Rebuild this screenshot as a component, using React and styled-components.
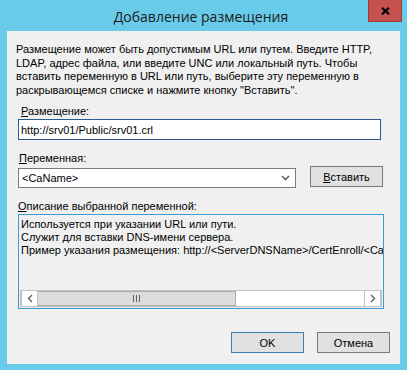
import React from "react";
import styled, { createGlobalStyle } from "styled-components";

const colors = {
  frame: "#69cbea",
  face: "#f0f0f0",
  text: "#000000",
  closeRed: "#c75050",
  closeBorder: "#9c3b36",
  focusBorder: "#2a5b8f",
  infoBorder: "#3c9ad6",
  okBorder: "#3c7fb1",
  grayBorder: "#7a7a7a",
  buttonBg: "#e1e1e1",
  scrollBorder: "#c2c2c2",
  thumb: "#dcdcdc",
  thumbBorder: "#acacac",
  arrow: "#606060",
};

const GlobalStyle = createGlobalStyle`
  html, body {
    margin: 0;
    padding: 0;
    background: ${colors.frame};
  }
  * {
    box-sizing: border-box;
  }
`;

const Accel = ({ children }) => <u>{children}</u>;

const App = () => {
  return (
    <Window>
      <GlobalStyle />
      <TitleBar>
        <span />
        <Title>Добавление размещения</Title>
        <CloseButton aria-label="Закрыть">
          <svg width="9" height="8" viewBox="0 0 9 8">
            <path d="M1 0.8 L8 7.2 M8 0.8 L1 7.2" stroke="#000" strokeWidth="2.2" />
          </svg>
        </CloseButton>
      </TitleBar>
      <Client>
        <Intro>
          Размещение может быть допустимым URL или путем. Введите HTTP,
          LDAP, адрес файла, или введите UNC или локальный путь. Чтобы
          вставить переменную в URL или путь, выберите эту переменную в
          раскрывающемся списке и нажмите кнопку "Вставить".
        </Intro>

        <FieldLabel indent={3}>
          <Accel>Р</Accel>азмещение:
        </FieldLabel>
        <TextInput defaultValue="http://srv01/Public/srv01.crl" />

        <FieldLabel indent={1} gap={11}>
          <Accel>П</Accel>еременная:
        </FieldLabel>
        <VariableRow>
          <Select>
            <span>&lt;CaName&gt;</span>
            <svg width="9" height="6" viewBox="0 0 9 6">
              <path d="M1 1 L4.5 4.5 L8 1" fill="none" stroke={colors.arrow} strokeWidth="1.6" />
            </svg>
          </Select>
          <DialogButton>
            <Accel>В</Accel>ставить
          </DialogButton>
        </VariableRow>

        <FieldLabel indent={0} gap={11}>
          <Accel>О</Accel>писание выбранной переменной:
        </FieldLabel>
        <InfoBox>
          <InfoText>
            <div>Используется при указании URL или пути.</div>
            <div>Служит для вставки DNS-имени сервера.</div>
            <div>
              Пример указания размещения: http://&lt;ServerDNSName&gt;/CertEnroll/&lt;CaName&gt;&lt;CRLNameSuffix&gt;&lt;DeltaCRLAllowed&gt;.crl
            </div>
          </InfoText>
          <HScroll>
            <ScrollArrow>
              <svg width="6" height="9" viewBox="0 0 6 9">
                <path d="M5 1 L1.5 4.5 L5 8" fill="none" stroke={colors.arrow} strokeWidth="1.4" />
              </svg>
            </ScrollArrow>
            <Track>
              <Thumb span={198}>
                <Grip>
                  <i />
                  <i />
                  <i />
                </Grip>
              </Thumb>
            </Track>
            <ScrollArrow>
              <svg width="6" height="9" viewBox="0 0 6 9">
                <path d="M1 1 L4.5 4.5 L1 8" fill="none" stroke={colors.arrow} strokeWidth="1.4" />
              </svg>
            </ScrollArrow>
          </HScroll>
        </InfoBox>

        <Footer>
          <DialogButton primary>OK</DialogButton>
          <DialogButton>Отмена</DialogButton>
        </Footer>
      </Client>
    </Window>
  );
};

const Window = styled.div`
  display: flex;
  flex-direction: column;
  width: 407px;
  height: 370px;
  background: ${colors.frame};
  font-family: "Liberation Sans", Arial, sans-serif;
  font-size: 11px;
  color: ${colors.text};
`;

const TitleBar = styled.div`
  display: grid;
  grid-template-columns: 1fr auto 1fr;
  height: 31px;
  padding-right: 5px;
`;

const Title = styled.div`
  align-self: center;
  padding-top: 2px;
  font-family: "Open Sans", "Noto Sans", sans-serif;
  font-size: 14px;
  color: #1b1b1b;
  white-space: nowrap;
`;

const CloseButton = styled.button`
  justify-self: end;
  align-self: start;
  display: flex;
  align-items: center;
  justify-content: center;
  width: 34px;
  height: 22px;
  padding: 0;
  border: 1px solid ${colors.closeBorder};
  border-top: none;
  background: ${colors.closeRed};
`;

const Client = styled.div`
  display: flex;
  flex-direction: column;
  flex: 1;
  margin: 0 7px 6px 7px;
  padding: 12px 0 0 11px;
  background: ${colors.face};
`;

const Intro = styled.p`
  margin: 0 0 0 -2px;
  width: 372px;
  line-height: 13.5px;
`;

const FieldLabel = styled.div`
  margin-top: ${({ gap }) => gap ?? 7}px;
  padding-left: ${({ indent }) => indent}px;
  line-height: 14px;
`;

const TextInput = styled.input`
  width: 363px;
  height: 21px;
  margin-top: 1px;
  padding: 0 2px;
  border: 1px solid ${colors.focusBorder};
  background: #fff;
  font: inherit;
  color: ${colors.text};
  outline: none;
`;

const VariableRow = styled.div`
  display: flex;
  align-items: flex-start;
  gap: 14px;
  margin-top: 1px;
`;

const Select = styled.div`
  display: flex;
  align-items: center;
  justify-content: space-between;
  width: 278px;
  height: 20px;
  margin-top: 2px;
  padding: 0 5px 0 3px;
  border: 1px solid ${colors.grayBorder};
  background: #fff;
`;

const DialogButton = styled.button`
  width: 73px;
  height: 21px;
  padding: 0;
  border: 1px solid ${({ primary }) => (primary ? colors.okBorder : colors.grayBorder)};
  background: ${colors.buttonBg};
  font: inherit;
  color: ${colors.text};
`;

const InfoBox = styled.div`
  display: flex;
  flex-direction: column;
  width: 366px;
  height: 95px;
  margin-top: 1px;
  border: 1px solid ${colors.infoBorder};
  background: ${colors.face};
`;

const InfoText = styled.div`
  flex: 1;
  overflow: hidden;
  padding: 3px 0 0 2px;
  line-height: 13px;
  white-space: nowrap;
`;

const HScroll = styled.div`
  display: grid;
  grid-template-columns: 17px 1fr 17px;
  height: 17px;
  margin: 0 1px 1px 1px;
  border: 1px solid ${colors.scrollBorder};
  background: #fff;
`;

const ScrollArrow = styled.div`
  display: flex;
  align-items: center;
  justify-content: center;
  background: #fff;
  border-left: 1px solid ${colors.scrollBorder};
  border-right: 1px solid ${colors.scrollBorder};
`;

const Track = styled.div`
  display: flex;
  background: #fff;
`;

const Thumb = styled.div`
  display: flex;
  align-items: center;
  justify-content: center;
  width: ${({ span }) => span}px;
  background: ${colors.thumb};
  border: 1px solid ${colors.thumbBorder};
  border-left: none;
`;

const Grip = styled.div`
  display: flex;
  gap: 2px;

  i {
    display: block;
    width: 1px;
    height: 7px;
    background: ${colors.arrow};
  }
`;

const Footer = styled.div`
  display: flex;
  justify-content: flex-end;
  gap: 13px;
  margin-top: 23px;
  padding-right: 10px;
`;

export default App;
